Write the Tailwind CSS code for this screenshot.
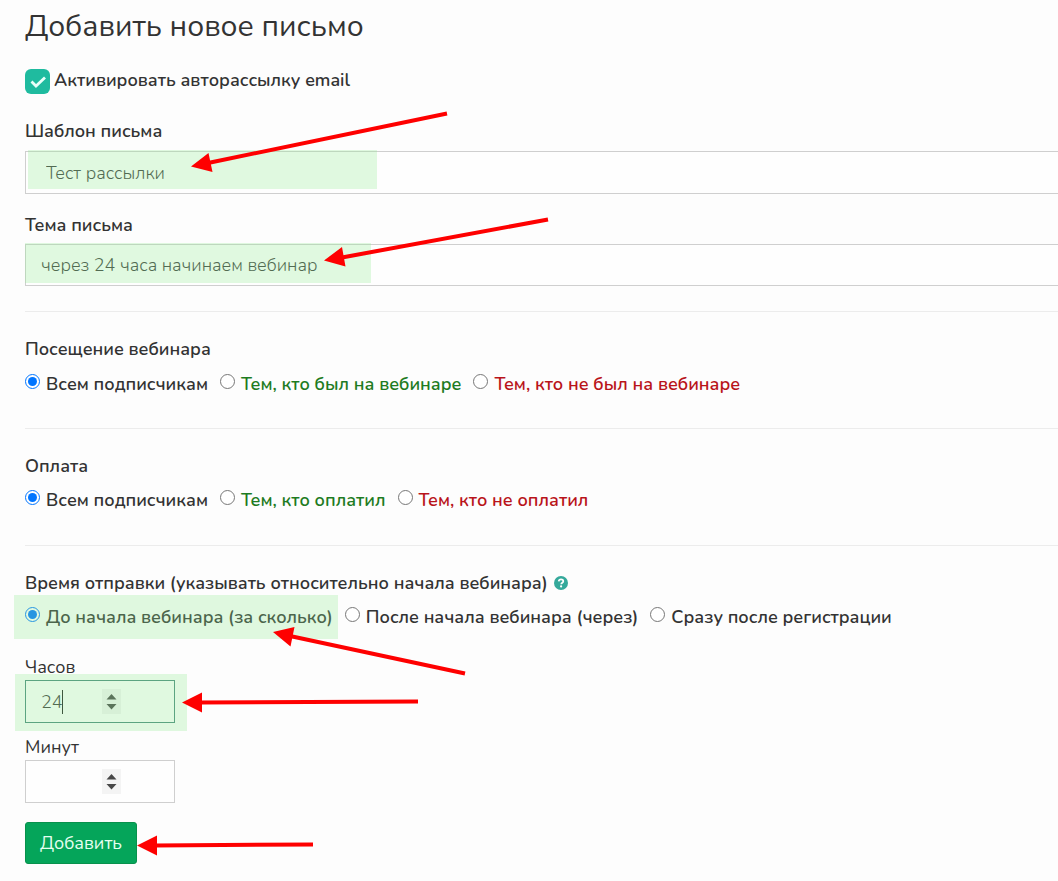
<!DOCTYPE html>
<html lang="ru">
<head>
<meta charset="utf-8">
<meta name="viewport" content="width=device-width, initial-scale=1">
<title>Добавить новое письмо</title>
<script src="https://cdn.jsdelivr.net/npm/@tailwindcss/browser@4"></script>
</head>
<body class="bg-[#fdfdfd] text-[#333333] font-['Nunito','Open_Sans',sans-serif] text-[18px] leading-6">
<main class="relative overflow-hidden pl-[25px] pt-[7px] pb-4">
  <h1 class="text-[30px] leading-10">Добавить новое письмо</h1>

  <form>
    <label class="mt-[21px] flex h-[26px] items-center gap-1 font-semibold">
      <span class="relative size-[25px] shrink-0">
        <input type="checkbox" checked class="block size-[25px] appearance-none rounded-[6px] bg-[#1fbb9f]">
        <svg class="pointer-events-none absolute inset-0" width="25" height="25" viewBox="0 0 25 25" fill="none" stroke="#e9fff9" stroke-width="2.800"><path d="M6.500 12.500l4.500 4.500 9-8.500"/></svg>
      </span>
      <span class="pb-[2px]">Активировать авторассылку email</span>
    </label>

    <div class="mt-[25px]">
      <label for="tpl" class="block font-semibold">Шаблон письма</label>
      <div class="relative mt-2">
        <input id="tpl" type="text" value="Тест рассылки" class="block h-[43px] w-full border border-r-0 border-[#cfcfcf] bg-[#fefefe] pl-5 font-light text-[#3c3c3c] outline-none">
        <span class="pointer-events-none absolute left-[3px] -top-px h-[39px] w-[349px] bg-[#90ee90]/27"></span>
      </div>
    </div>

    <div class="mt-[19px]">
      <label for="subj" class="block font-semibold">Тема письма</label>
      <div class="relative mt-[7px]">
        <input id="subj" type="text" value="через 24 часа начинаем вебинар" class="block h-[42px] w-full border border-r-0 border-[#cfcfcf] bg-[#fefefe] pl-[15px] font-light text-[#3c3c3c] outline-none">
        <span class="pointer-events-none absolute left-0 -top-px h-10 w-[346px] bg-[#90ee90]/27"></span>
      </div>
    </div>

    <div role="radiogroup" aria-labelledby="visit-title" class="mt-[25px] border-t border-[#ececec] pt-[25px] font-semibold">
      <p id="visit-title">Посещение вебинара</p>
      <div class="mt-[11px] flex gap-3 whitespace-nowrap">
        <label class="flex gap-[6px]"><input type="radio" name="visit" checked class="mt-[2px] size-[15px] shrink-0">Всем подписчикам</label>
        <label class="flex gap-[6px] text-[#1e7b22]"><input type="radio" name="visit" class="mt-[2px] size-[15px] shrink-0">Тем, кто был на вебинаре</label>
        <label class="flex gap-[6px] text-[#b9141a]"><input type="radio" name="visit" class="mt-[2px] size-[15px] shrink-0">Тем, кто не был на вебинаре</label>
      </div>
    </div>

    <div role="radiogroup" aria-labelledby="pay-title" class="mt-8 border-t border-[#ececec] pt-[25px] font-semibold">
      <p id="pay-title">Оплата</p>
      <div class="mt-[10px] flex gap-3 whitespace-nowrap">
        <label class="flex gap-[6px]"><input type="radio" name="pay" checked class="mt-[2px] size-[15px] shrink-0">Всем подписчикам</label>
        <label class="flex gap-[6px] text-[#1e7b22]"><input type="radio" name="pay" class="mt-[2px] size-[15px] shrink-0">Тем, кто оплатил</label>
        <label class="flex gap-[6px] text-[#b9141a]"><input type="radio" name="pay" class="mt-[2px] size-[15px] shrink-0">Тем, кто не оплатил</label>
      </div>
    </div>

    <div role="radiogroup" aria-labelledby="when-title" class="mt-[33px] border-t border-[#ececec] pt-[25px] font-semibold">
      <p id="when-title" class="flex items-center gap-[6px]">Время отправки (указывать относительно начала вебинара)
        <svg width="14" height="14" viewBox="0 0 14 14" role="img" aria-label="Справка"><circle cx="7" cy="7" r="7" fill="#35a99b"/><path d="M4.700 5.300C4.900 3.900 5.800 3.300 7 3.300c1.300 0 2.300.8 2.300 1.900 0 1.500-2 1.500-2.100 3" fill="none" stroke="#fff" stroke-width="1.700"/><circle cx="7.100" cy="10.400" r="1.100" fill="#fff"/></svg>
      </p>
      <div class="relative mt-[10px] flex gap-3 whitespace-nowrap">
        <label class="flex gap-[6px]"><input type="radio" name="when" checked class="mt-[2px] size-[15px] shrink-0">До начала вебинара (за сколько)</label>
        <label class="flex gap-[6px]"><input type="radio" name="when" class="mt-[2px] size-[15px] shrink-0">После начала вебинара (через)</label>
        <label class="flex gap-[6px]"><input type="radio" name="when" class="mt-[2px] size-[15px] shrink-0">Сразу после регистрации</label>
        <span class="pointer-events-none absolute -left-[11px] -top-[10px] h-11 w-[324px] bg-[#90ee90]/27"></span>
      </div>
    </div>

    <div class="mt-[27px]">
      <label for="hours" class="block leading-[22px]">Часов</label>
      <div class="relative mt-[2px] w-[150px]">
        <input id="hours" type="text" inputmode="numeric" value="24" class="block h-[43px] w-full border border-[#498a7c] bg-[#fefefe] pl-[15px] font-light text-[#3c3c3c] outline-none">
        <span class="absolute left-[37px] top-[10px] h-6 w-px bg-[#222222]"></span>
        <svg class="absolute left-[77px] top-[9px]" width="19" height="25" viewBox="0 0 19 25" fill="#484848"><path fill="#f2f2f2" d="M0 0h19v25H0z"/><path d="M9.500 5l5 5.500h-10zM4.500 15h10l-5 5.500z"/></svg>
        <span class="pointer-events-none absolute -left-[10px] -top-[6px] h-[57px] w-[172px] bg-[#90ee90]/27"></span>
      </div>
    </div>

    <div class="mt-[13px]">
      <label for="minutes" class="block leading-[22px]">Минут</label>
      <div class="relative mt-[2px] w-[150px]">
        <input id="minutes" type="text" inputmode="numeric" class="block h-[43px] w-full border border-[#cfcfcf] bg-[#fefefe] pl-[15px] font-light text-[#3c3c3c] outline-none">
        <svg class="absolute left-[77px] top-[9px]" width="19" height="25" viewBox="0 0 19 25" fill="#484848"><path fill="#f4f4f4" d="M0 0h19v25H0z"/><path d="M9.500 5l5 5.500h-10zM4.500 15h10l-5 5.500z"/></svg>
      </div>
    </div>

    <button type="button" class="mt-[19px] block h-[42px] w-28 rounded-[3px] border border-[#08914c] bg-[#05a55a] text-[#e4fff0]">Добавить</button>
  </form>

  <!-- Pointer arrows over the form -->
  <svg class="pointer-events-none absolute left-0 top-0" width="560" height="870" viewBox="0 0 560 870" fill="#fe0000" stroke="#fe0000" aria-hidden="true">
    <g stroke-width="4">
      <path d="M447 113.500L208 163M548 219.500L342 257.500M465 673.500L290 636M418 701.500L200 702.500M313 844.500L155 845.500"/>
    </g>
    <g stroke="none">
      <path d="M191 166.500l17.500-13.500 4 19zM324 260.500l18-13.500 3.500 19.500zM273 632l21.500-5-4 19.500zM182 702.500l20-10v20zM137 845.500l20-10v20z"/>
    </g>
  </svg>
</main>
</body>
</html>
